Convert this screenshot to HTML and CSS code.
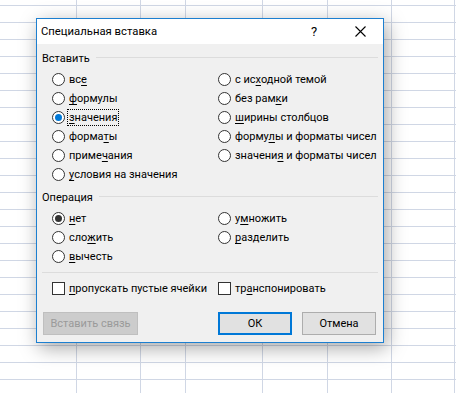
FILE: index.html
```html
<!DOCTYPE html>
<html>
  <head>
    <meta charset="UTF-8">
    <title>Специальная вставка</title>
    <link rel="stylesheet" href="styles.css">
  </head>
  <body>
    <div class="sheet">
      <div class="col c1"></div>
      <div class="col c2"></div>
      <div class="col c3"></div>
      <div class="col c4"></div>
      <div class="col c5"></div>
      <div class="col c6"></div>
      <div class="col c7"></div>
    </div>

    <div class="dialog">
      <div class="titlebar">
        <span class="title">Специальная вставка</span>
        <span class="help">?</span>
        <span class="close">
          <svg width="11" height="11" viewBox="0 0 11 11">
            <path d="M0.5 0.5 L10.5 10.5 M10.5 0.5 L0.5 10.5" stroke="#000" stroke-width="1.1" fill="none"/>
          </svg>
        </span>
      </div>

      <div class="content">
        <div class="group-label"><span>Вставить</span></div>
        <div class="options">
          <div class="opt-col">
            <label class="opt"><span class="radio"></span><span class="text">вс<u>е</u></span></label>
            <label class="opt"><span class="radio"></span><span class="text"><u>ф</u>ормулы</span></label>
            <label class="opt"><span class="radio checked focus-dot"></span><span class="text focused"><u>з</u>начения</span></label>
            <label class="opt"><span class="radio"></span><span class="text">форма<u>т</u>ы</span></label>
            <label class="opt"><span class="radio"></span><span class="text">приме<u>ч</u>ания</span></label>
            <label class="opt"><span class="radio"></span><span class="text"><u>у</u>словия на значения</span></label>
          </div>
          <div class="opt-col">
            <label class="opt"><span class="radio"></span><span class="text">с ис<u>х</u>одной темой</span></label>
            <label class="opt"><span class="radio"></span><span class="text">без рам<u>к</u>и</span></label>
            <label class="opt"><span class="radio"></span><span class="text"><u>ш</u>ирины столбцов</span></label>
            <label class="opt"><span class="radio"></span><span class="text">форму<u>л</u>ы и форматы чисел</span></label>
            <label class="opt"><span class="radio"></span><span class="text">значени<u>я</u> и форматы чисел</span></label>
          </div>
        </div>

        <div class="group-label second"><span>Операция</span></div>
        <div class="options">
          <div class="opt-col">
            <label class="opt"><span class="radio checked"></span><span class="text"><u>н</u>ет</span></label>
            <label class="opt"><span class="radio"></span><span class="text">сло<u>ж</u>ить</span></label>
            <label class="opt"><span class="radio"></span><span class="text"><u>в</u>ычесть</span></label>
          </div>
          <div class="opt-col">
            <label class="opt"><span class="radio"></span><span class="text">у<u>м</u>ножить</span></label>
            <label class="opt"><span class="radio"></span><span class="text"><u>р</u>азделить</span></label>
          </div>
        </div>

        <div class="sep"></div>

        <div class="options checks">
          <div class="opt-col">
            <label class="opt"><span class="box"></span><span class="text"><u>п</u>ропускать пустые ячейки</span></label>
          </div>
          <div class="opt-col">
            <label class="opt"><span class="box"></span><span class="text">тр<u>а</u>нспонировать</span></label>
          </div>
        </div>

        <div class="buttons">
          <button class="btn disabled">Вставить связь</button>
          <span class="spacer"></span>
          <button class="btn default">ОК</button>
          <button class="btn">Отмена</button>
        </div>
      </div>
    </div>
  </body>
</html>
```

FILE: styles.css
```css
html,
body {
  margin: 0;
  padding: 0;
  height: 100%;
  overflow: hidden;
  background: #fff;
  font-family: Roboto, "Noto Sans", sans-serif;
  font-size: 11px;
  color: #000;
}

/* spreadsheet behind the dialog */
.sheet {
  display: flex;
  height: 100%;
  background-image: linear-gradient(to bottom, #d0d7e5 1px, transparent 1px);
  background-size: 100% 17px;
  background-position: 0 5px;
}

.col {
  border-right: 1px solid #d0d7e5;
  flex: none;
}

.c1 { width: 76px; }
.c2 { width: 63px; }
.c3 { width: 44px; }
.c4 { width: 76px; }
.c5 { width: 64px; }
.c6 { width: 63px; }
.c7 { width: 62px; }

/* dialog window */
.dialog {
  position: absolute;
  left: 36px;
  top: 18px;
  width: 348px;
  height: 325px;
  box-sizing: border-box;
  border: 1px solid #1c7fd0;
  background: #f0f0f0;
  box-shadow: 3px 5px 18px rgba(0, 0, 0, 0.35);
}

.titlebar {
  display: flex;
  align-items: center;
  height: 25px;
  background: #fff;
  padding-left: 4px;
}

.title {
  flex: 1;
  font-size: 11.3px;
}

.help {
  width: 12px;
  margin-right: 35px;
  text-align: center;
  font-size: 13px;
}

.close {
  display: flex;
  width: 11px;
  margin-right: 17px;
}

.content {
  padding: 6px 5px 0 5px;
}

.group-label {
  display: flex;
  align-items: center;
  height: 16px;
}

.group-label::after {
  content: "";
  flex: 1;
  height: 1px;
  background: #dcdcdc;
  margin: 0 0 1px 6px;
}

.group-label.second {
  margin-top: 5px;
}

.options {
  display: flex;
  padding-top: 4px;
  padding-left: 10px;
}

.opt-col {
  display: flex;
  flex-direction: column;
  flex: none;
}

.opt-col:first-child {
  width: 166px;
}

.opt {
  display: flex;
  align-items: center;
  height: 19px;
  white-space: nowrap;
}

.radio,
.box {
  flex: none;
  width: 13px;
  height: 13px;
  box-sizing: border-box;
  border: 1px solid #333;
  background: #fff;
  margin-right: 4px;
  position: relative;
}

.radio {
  border-radius: 50%;
}

.radio.checked::after {
  content: "";
  position: absolute;
  left: 2px;
  top: 2px;
  width: 7px;
  height: 7px;
  border-radius: 50%;
  background: #333;
}

.radio.focus-dot::after {
  background: #0078d7;
}

.text u {
  text-decoration-thickness: 1px;
  text-underline-offset: 2px;
}

.text.focused {
  outline: 1px dotted #000;
  outline-offset: 0;
  padding: 0 1px;
  margin-left: -1px;
  line-height: 15px;
}

.sep {
  height: 1px;
  background: #dcdcdc;
  margin-top: 6px;
}

.checks {
  padding-top: 6px;
}

.buttons {
  display: flex;
  margin-top: 14px;
  padding-left: 1px;
}

.spacer {
  flex: none;
  width: 70px;
}

.btn {
  flex: none;
  height: 23px;
  box-sizing: border-box;
  font-family: inherit;
  font-size: 11px;
  color: #000;
  background: #e1e1e1;
  border: 1px solid #adadad;
  padding: 0;
  width: 74px;
  margin-right: 10px;
}

.btn:last-child {
  margin-right: 0;
}

.btn.disabled {
  width: 95px;
  background: #cccccc;
  border-color: #bfbfbf;
  color: #9a9a9a;
}

.btn.default {
  border: 2px solid #0078d7;
}
```
